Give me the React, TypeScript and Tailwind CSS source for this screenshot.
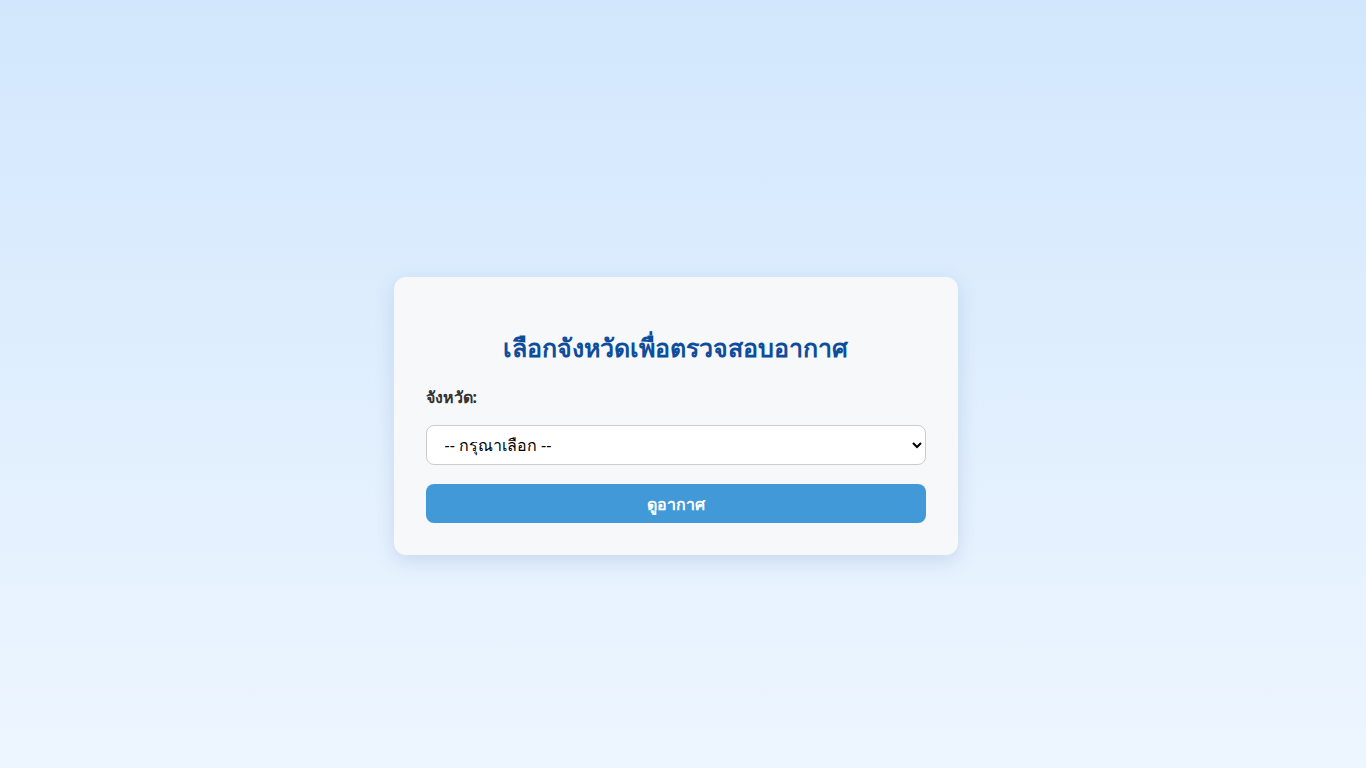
export default function App() {
  return (
    <div
      className="min-h-[calc(100vh+64px)] py-8 pr-[15px] flex items-center justify-center bg-linear-to-b from-[#d2e7fd] to-[#f0f7ff]"
      style={{ fontFamily: '"Noto Sans", "Open Sans", Tahoma, sans-serif' }}
    >
      <div className="w-[564px] rounded-xl bg-[#f6f8fa] p-8 shadow-[0_6px_20px_rgba(30,80,140,0.15)]">
        <h2 className="mt-5 mb-5 text-center text-[25px] leading-9 font-bold text-[#0e4d9b]">
          เลือกจังหวัดเพื่อตรวจสอบอากาศ
        </h2>
        <label className="block text-base leading-6 font-bold text-[#333333]">จังหวัด:</label>
        <select className="mt-4 block h-10 w-full rounded-lg border border-[#cccccc] bg-white px-3.5 text-base text-black">
          <option>-- กรุณาเลือก --</option>
        </select>
        <button className="mt-[19px] h-[39px] w-full rounded-lg bg-[#4299d8] text-base font-semibold text-white">
          ดูอากาศ
        </button>
      </div>
    </div>
  );
}
